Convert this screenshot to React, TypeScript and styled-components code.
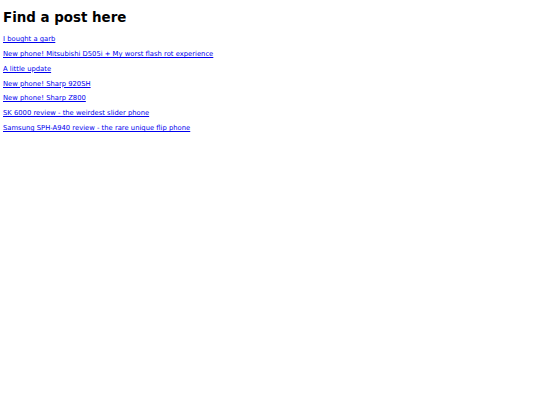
import React from 'react';
import styled, { createGlobalStyle } from "styled-components";

const GlobalStyle = createGlobalStyle`
    body {
        margin: 3px;
        background: #ffffff;
        font-family: "DejaVu Sans", Verdana, sans-serif;
        color: #000000;
    }
`

const posts = [
   "I bought a garb",
   "New phone! Mitsubishi D505i + My worst flash rot experience",
   "A little update",
   "New phone! Sharp 920SH",
   "New phone! Sharp Z800",
   "SK 6000 review - the weirdest slider phone",
   "Samsung SPH-A940 review - the rare unique flip phone",
]

export default function App() {
   return (
      <>
         <GlobalStyle/>
         <Title>Find a post here</Title>
         <PostList>
            {posts.map((p) => (
               <Item key={p}><PostLink href="#">{p}</PostLink></Item>
            ))}
         </PostList>
      </>
   );
}

const Title = styled.h1`
    font-size: 13.4px;
    line-height: 16px;
    font-weight: bold;
    margin: 7px 0 9.2px;
`

const PostList = styled.div`
    display: flex;
    flex-direction: column;
    gap: 6.8px;
`

const Item = styled.div`
    font-size: 6.8px;
    line-height: 8px;
`

const PostLink = styled.a`
    color: #0000ee;
`
